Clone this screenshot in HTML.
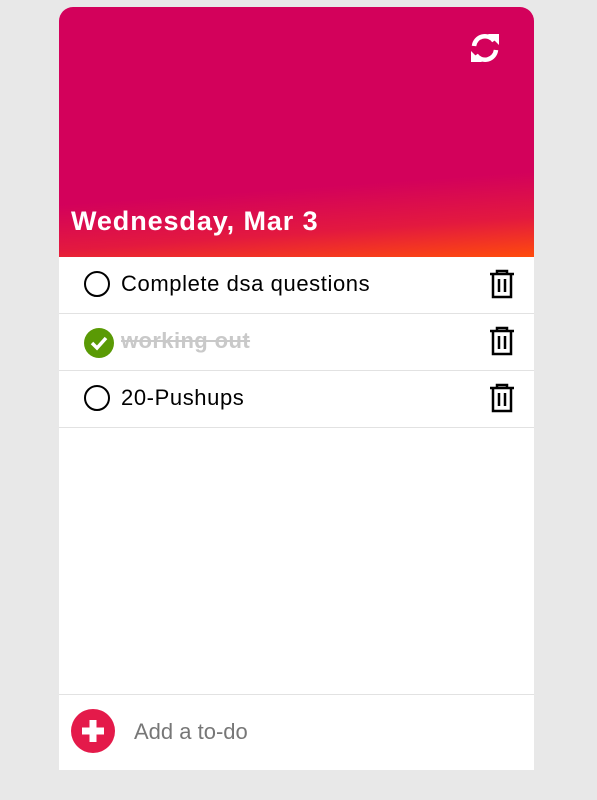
<!DOCTYPE html>
<html><head><style>
body{margin:0;background:#e8e8e8;width:597px;height:800px;position:relative;font-family:"Liberation Sans",sans-serif;overflow:hidden}
.card{position:absolute;left:59px;top:7px;width:475px;height:763px;background:#fff;border-radius:14px 14px 0 0;overflow:hidden}
.hdr{position:absolute;left:0;top:0;width:475px;height:250px;background:linear-gradient(176deg,#d3015b 0%,#d3015b 70%,#e3193f 86%,#ff4b0c 100%)}
.date{position:absolute;left:12px;top:199px;color:#fff;font-weight:bold;font-size:27px;letter-spacing:0.9px}
.ref{position:absolute;left:410px;top:24px}
.row{position:absolute;left:0;width:475px;height:56px;border-bottom:1px solid #e2e2e2}
.row .c{position:absolute;left:25px;top:14px;width:26px;height:26px;border:2px solid #000;border-radius:50%;box-sizing:border-box}
.row .t{position:absolute;left:62px;top:14px;font-size:22px;letter-spacing:0.6px;color:#000}
.row .tr{position:absolute;left:429px;top:12px}
.add{position:absolute;left:0;top:687px;width:475px;height:76px;border-top:1px solid #e2e2e2}
</style></head><body>
<div class="card">
<div class="hdr">
<svg class="ref" width="32" height="34" viewBox="0 0 32 34"><g fill="none" stroke="#fff" stroke-width="4.5"><path d="M5 15 A11 11 0 0 1 25 10"/><path d="M27 19 A11 11 0 0 1 7 24"/></g><path d="M19 3 L30 3 L30 14 Z" fill="#fff"/><path d="M2 31 L2 20 L13 31 Z" fill="#fff"/></svg>
<div class="date">Wednesday, Mar 3</div>
</div>
<div class="row" style="top:250px"><div class="c"></div><div class="t">Complete dsa questions</div>
<svg class="tr" width="28" height="30" viewBox="0 0 28 30"><g fill="none" stroke="#000" stroke-width="2.5"><path d="M2 5H26M9 5V2H19V5M5 5V28H23V5M11 10V23M17 10V23"/></g></svg></div>
<div class="row" style="top:307px"><div style="position:absolute;left:25px;top:14px;width:30px;height:30px;border-radius:50%;background:#5a9a05"></div>
<svg style="position:absolute;left:25px;top:14px" width="30" height="30"><path d="M8 15 L13 20 L22 10" fill="none" stroke="#fff" stroke-width="3.5"/></svg>
<div class="t" style="color:#c9c9c9;text-decoration:line-through;font-weight:bold;letter-spacing:0.4px">working out</div>
<svg class="tr" width="28" height="30" viewBox="0 0 28 30"><g fill="none" stroke="#000" stroke-width="2.5"><path d="M2 5H26M9 5V2H19V5M5 5V28H23V5M11 10V23M17 10V23"/></g></svg></div>
<div class="row" style="top:364px"><div class="c"></div><div class="t">20-Pushups</div>
<svg class="tr" width="28" height="30" viewBox="0 0 28 30"><g fill="none" stroke="#000" stroke-width="2.5"><path d="M2 5H26M9 5V2H19V5M5 5V28H23V5M11 10V23M17 10V23"/></g></svg></div>
<div class="add">
<svg style="position:absolute;left:12px;top:14px" width="44" height="44"><circle cx="22" cy="22" r="22" fill="#e41a4a"/><path d="M22 11V33M11 22H33" stroke="#fff" stroke-width="7"/></svg>
<div style="position:absolute;left:75px;top:24px;font-size:22px;color:#777">Add a to-do</div>
</div>
</div>
</body></html>
